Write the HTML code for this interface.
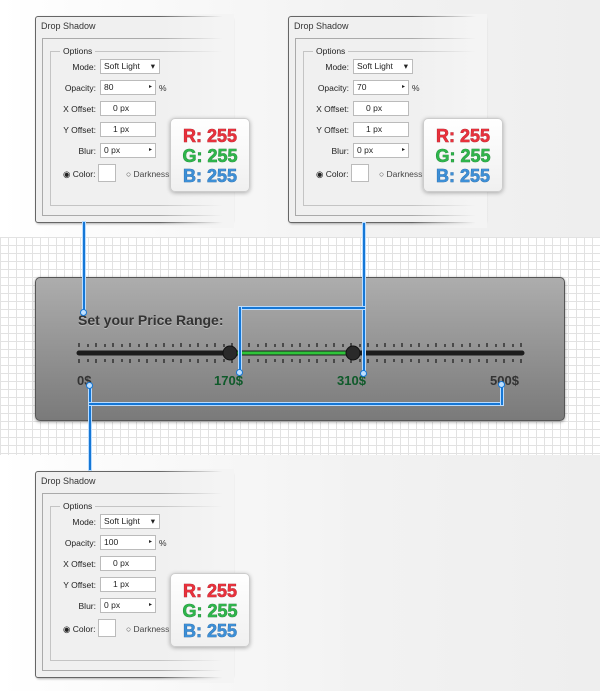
<!DOCTYPE html>
<html><head><meta charset="utf-8"><style>
*{margin:0;padding:0;box-sizing:border-box}
body{width:600px;height:691px;position:relative;overflow:hidden;background:linear-gradient(90deg,#fff 0%,#f2f2f2 60%,#eee 100%);font-family:"Liberation Sans",sans-serif}
.grid{position:absolute;left:0;top:237px;width:600px;height:218px;background-color:#fff;background-image:linear-gradient(#e2e2e2 1px,transparent 1px),linear-gradient(90deg,#e2e2e2 1px,transparent 1px);background-size:8px 8px}
.dlg{position:absolute;width:197px;height:207px;border:1px solid #666;border-radius:3px;background:#f0f0f0;box-shadow:1px 1px 2px rgba(0,0,0,.3);font-size:8.5px;color:#222}
.fade{position:absolute;right:-3px;top:-3px;width:75px;height:214px;background:linear-gradient(90deg,rgba(245,245,245,0),#f4f4f4 85%)}
.ttl{position:absolute;left:5px;top:4px;font-size:9px;color:#333}
.in{position:absolute;left:6px;top:21px;right:-2px;height:178px;border:1px solid #aaa;border-right:none}
.grp{position:absolute;left:14px;top:34px;width:177px;height:155px;border:1px solid #c4c4c4}
.leg{position:absolute;left:24px;top:29px;background:#f0f0f0;padding:0 3px}
.lb{position:absolute;width:60px;text-align:right}
.box{position:absolute;left:64px;height:15px;background:#fff;border:1px solid #bbb;padding-left:3px;line-height:13px}
.rgb{position:absolute;width:80px;height:74px;background:linear-gradient(#fff,#f0f0f0);border:1px solid #ccc;border-radius:5px;box-shadow:0 1px 4px rgba(0,0,0,.3);font-weight:bold;font-size:18px;line-height:20px;text-align:center;padding-top:7px}
.rgb div{-webkit-text-stroke:0.6px;paint-order:stroke fill}
.panel{position:absolute;left:35px;top:277px;width:530px;height:144px;border-radius:5px;border:1px solid #555;background:linear-gradient(#adadad,#7a7a7a);box-shadow:0 1px 3px rgba(0,0,0,.4)}
.bl{position:absolute;background:#1577d6;border:1px solid #b9dcff}
.dot{position:absolute;width:7px;height:7px;border-radius:50%;background:#bfe0ff;border:1.5px solid #1577d6}
</style></head><body>
<div class="grid"></div>

<div class="dlg" style="left:35px;top:16px">
 <div class="ttl">Drop Shadow</div><div class="in"></div><div class="grp"></div><div class="leg">Options</div>
 <div class="lb" style="left:0;top:45px">Mode:</div><div class="box" style="top:42px;width:60px">Soft Light<span style="position:absolute;right:4px;top:0">▾</span></div>
 <div class="lb" style="left:0;top:66px">Opacity:</div><div class="box" style="top:63px;width:56px">80<span style="position:absolute;right:3px;font-size:6px">▸</span></div><div style="position:absolute;left:123px;top:66px">%</div>
 <div class="lb" style="left:0;top:87px">X Offset:</div><div class="box" style="top:84px;width:56px;padding-left:12px">0 px</div>
 <div class="lb" style="left:0;top:108px">Y Offset:</div><div class="box" style="top:105px;width:56px;padding-left:12px">1 px</div>
 <div class="lb" style="left:0;top:129px">Blur:</div><div class="box" style="top:126px;width:56px">0 px<span style="position:absolute;right:3px;font-size:6px">▸</span></div>
 <div style="position:absolute;left:27px;top:152px">◉ Color:</div><div class="box" style="top:147px;left:62px;width:18px;height:18px"></div>
 <div style="position:absolute;left:90px;top:152px;color:#444">○ Darkness</div>
 <div class="fade"></div>
</div>
<div class="dlg" style="left:288px;top:16px">
 <div class="ttl">Drop Shadow</div><div class="in"></div><div class="grp"></div><div class="leg">Options</div>
 <div class="lb" style="left:0;top:45px">Mode:</div><div class="box" style="top:42px;width:60px">Soft Light<span style="position:absolute;right:4px;top:0">▾</span></div>
 <div class="lb" style="left:0;top:66px">Opacity:</div><div class="box" style="top:63px;width:56px">70<span style="position:absolute;right:3px;font-size:6px">▸</span></div><div style="position:absolute;left:123px;top:66px">%</div>
 <div class="lb" style="left:0;top:87px">X Offset:</div><div class="box" style="top:84px;width:56px;padding-left:12px">0 px</div>
 <div class="lb" style="left:0;top:108px">Y Offset:</div><div class="box" style="top:105px;width:56px;padding-left:12px">1 px</div>
 <div class="lb" style="left:0;top:129px">Blur:</div><div class="box" style="top:126px;width:56px">0 px<span style="position:absolute;right:3px;font-size:6px">▸</span></div>
 <div style="position:absolute;left:27px;top:152px">◉ Color:</div><div class="box" style="top:147px;left:62px;width:18px;height:18px"></div>
 <div style="position:absolute;left:90px;top:152px;color:#444">○ Darkness</div>
 <div class="fade"></div>
</div>
<div class="dlg" style="left:35px;top:471px">
 <div class="ttl">Drop Shadow</div><div class="in"></div><div class="grp"></div><div class="leg">Options</div>
 <div class="lb" style="left:0;top:45px">Mode:</div><div class="box" style="top:42px;width:60px">Soft Light<span style="position:absolute;right:4px;top:0">▾</span></div>
 <div class="lb" style="left:0;top:66px">Opacity:</div><div class="box" style="top:63px;width:56px">100<span style="position:absolute;right:3px;font-size:6px">▸</span></div><div style="position:absolute;left:123px;top:66px">%</div>
 <div class="lb" style="left:0;top:87px">X Offset:</div><div class="box" style="top:84px;width:56px;padding-left:12px">0 px</div>
 <div class="lb" style="left:0;top:108px">Y Offset:</div><div class="box" style="top:105px;width:56px;padding-left:12px">1 px</div>
 <div class="lb" style="left:0;top:129px">Blur:</div><div class="box" style="top:126px;width:56px">0 px<span style="position:absolute;right:3px;font-size:6px">▸</span></div>
 <div style="position:absolute;left:27px;top:152px">◉ Color:</div><div class="box" style="top:147px;left:62px;width:18px;height:18px"></div>
 <div style="position:absolute;left:90px;top:152px;color:#444">○ Darkness</div>
 <div class="fade"></div>
</div>

<div class="rgb" style="left:170px;top:118px"><div style="color:#e8313c;-webkit-text-stroke-color:#a01822">R: 255</div><div style="color:#2fb44b;-webkit-text-stroke-color:#157a2c">G: 255</div><div style="color:#3d8fd6;-webkit-text-stroke-color:#1a5a99">B: 255</div></div>
<div class="rgb" style="left:423px;top:118px"><div style="color:#e8313c;-webkit-text-stroke-color:#a01822">R: 255</div><div style="color:#2fb44b;-webkit-text-stroke-color:#157a2c">G: 255</div><div style="color:#3d8fd6;-webkit-text-stroke-color:#1a5a99">B: 255</div></div>
<div class="rgb" style="left:170px;top:573px"><div style="color:#e8313c;-webkit-text-stroke-color:#a01822">R: 255</div><div style="color:#2fb44b;-webkit-text-stroke-color:#157a2c">G: 255</div><div style="color:#3d8fd6;-webkit-text-stroke-color:#1a5a99">B: 255</div></div>

<div class="panel">
 <div style="position:absolute;left:42px;top:34px;font-weight:bold;font-size:14px;color:#333;text-shadow:0 1px 0 rgba(255,255,255,.3)">Set your Price Range:</div>
 <svg style="position:absolute;left:0;top:0" width="530" height="144">
  <g stroke="#222" stroke-width="1.3">
   <path d="M43 65v4M52 66v3M60 65v4M69 66v3M77 65v4M86 66v3M94 65v4M103 66v3M111 65v4M120 66v3M128 65v4M137 66v3M145 65v4M154 66v3M162 65v4M171 66v3M179 65v4M188 66v3M196 65v4M205 66v3M213 65v4M222 66v3M230 65v4M239 66v3M247 65v4M256 66v3M264 65v4M273 66v3M281 65v4M290 66v3M298 65v4M307 66v3M315 65v4M324 66v3M332 65v4M341 66v3M349 65v4M358 66v3M366 65v4M375 66v3M383 65v4M392 66v3M400 65v4M409 66v3M417 65v4M426 66v3M434 65v4M443 66v3M451 65v4M460 66v3M468 65v4M477 66v3M485 65v4"/>
   <path d="M43 81v4M52 81v3M60 81v4M69 81v3M77 81v4M86 81v3M94 81v4M103 81v3M111 81v4M120 81v3M128 81v4M137 81v3M145 81v4M154 81v3M162 81v4M171 81v3M179 81v4M188 81v3M196 81v4M205 81v3M213 81v4M222 81v3M230 81v4M239 81v3M247 81v4M256 81v3M264 81v4M273 81v3M281 81v4M290 81v3M298 81v4M307 81v3M315 81v4M324 81v3M332 81v4M341 81v3M349 81v4M358 81v3M366 81v4M375 81v3M383 81v4M392 81v3M400 81v4M409 81v3M417 81v4M426 81v3M434 81v4M443 81v3M451 81v4M460 81v3M468 81v4M477 81v3M485 81v4"/>
  </g>
  <line x1="43" y1="75" x2="486" y2="75" stroke="#1c1c1c" stroke-width="5" stroke-linecap="round"/>
  <line x1="194" y1="75" x2="317" y2="75" stroke="#2ec43a" stroke-width="3"/>
  <circle cx="194" cy="75" r="7" fill="#2a2a2a" stroke="#111"/>
  <circle cx="317" cy="75" r="7" fill="#2a2a2a" stroke="#111"/>
  <g font-family="Liberation Sans" font-weight="bold" font-size="13">
   <text x="41" y="107" fill="#333">0$</text>
   <text x="178" y="107" fill="#0f5a2a">170$</text>
   <text x="301" y="107" fill="#0f5a2a">310$</text>
   <text x="454" y="107" fill="#333">500$</text>
  </g>
 </svg>
</div>

<div class="bl" style="left:82px;top:221px;width:4px;height:92px"></div>
<div class="dot" style="left:80px;top:309px"></div>
<div class="bl" style="left:362px;top:222px;width:4px;height:150px"></div>
<div class="bl" style="left:238px;top:306px;width:128px;height:4px"></div>
<div class="bl" style="left:238px;top:306px;width:4px;height:66px"></div>
<div class="dot" style="left:236px;top:369px"></div>
<div class="dot" style="left:360px;top:370px"></div>
<div class="bl" style="left:88px;top:385px;width:4px;height:86px"></div>
<div class="bl" style="left:88px;top:402px;width:416px;height:4px"></div>
<div class="bl" style="left:500px;top:386px;width:4px;height:20px"></div>
<div class="dot" style="left:86px;top:382px"></div>
<div class="dot" style="left:498px;top:381px"></div>
</body></html>
